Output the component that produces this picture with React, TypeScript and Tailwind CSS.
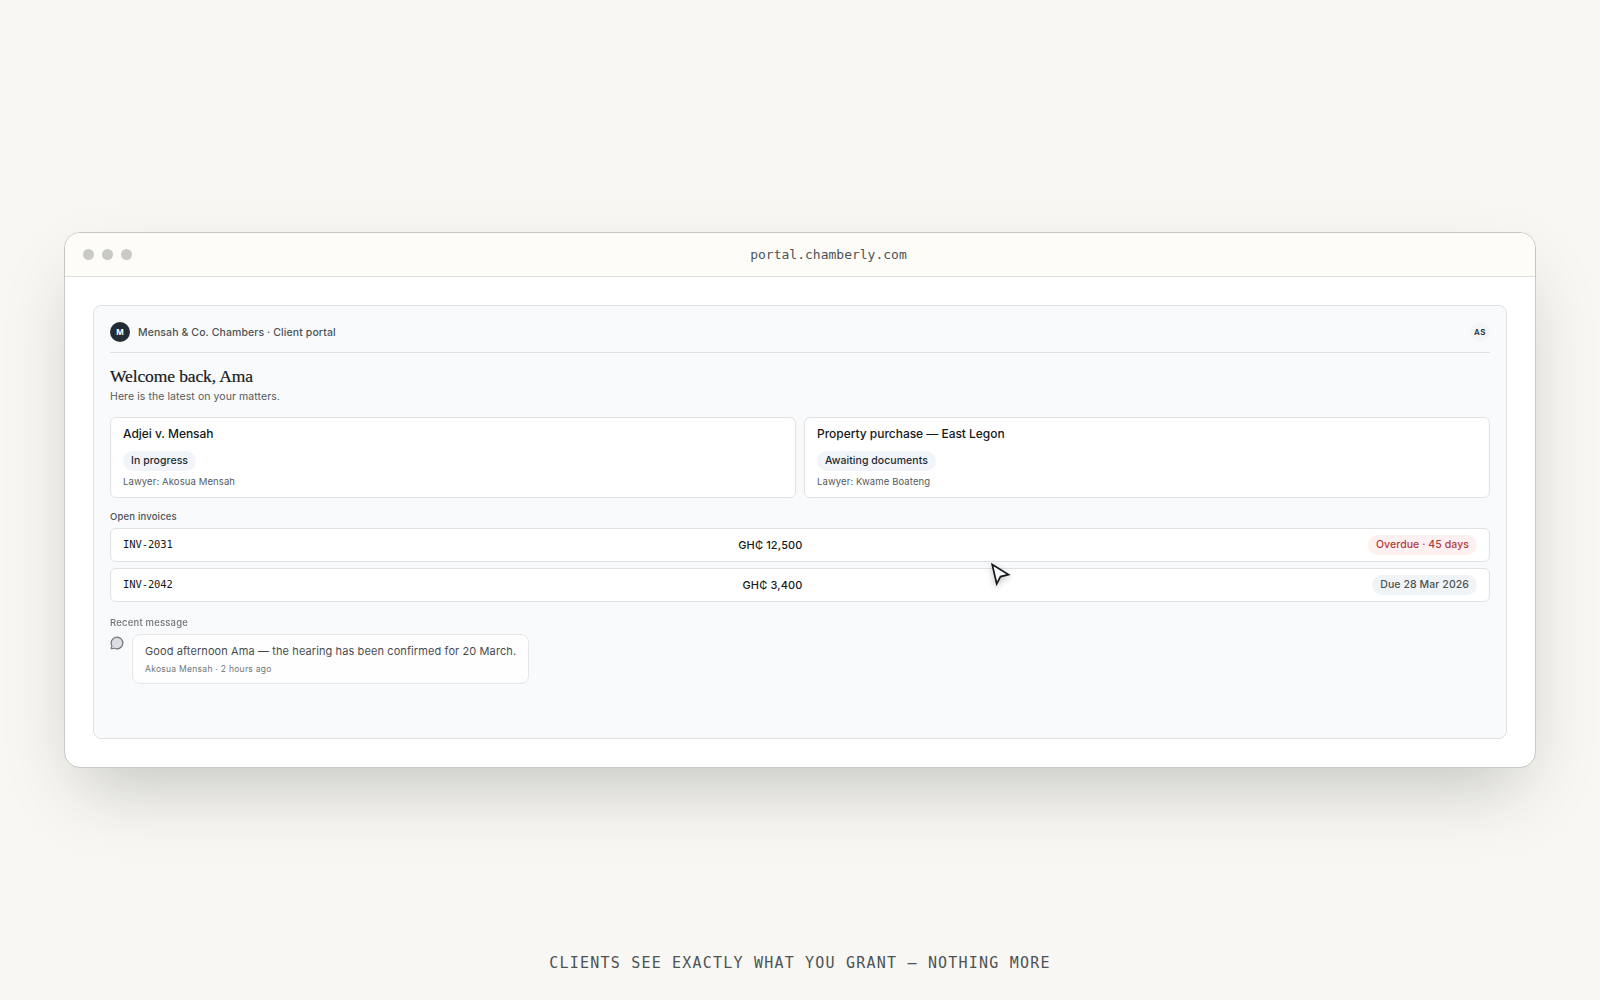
import { ReactNode } from 'react';
import { MessageCircle } from 'lucide-react';

const matters = [
  { title: 'Adjei v. Mensah', status: 'In progress', lawyer: 'Akosua Mensah' },
  { title: 'Property purchase — East Legon', status: 'Awaiting documents', lawyer: 'Kwame Boateng' },
];

const invoices = [
  { id: 'INV-2031', amount: 'GH₵ 12,500', due: 'Overdue · 45 days', overdue: true },
  { id: 'INV-2042', amount: 'GH₵ 3,400', due: 'Due 28 Mar 2026', overdue: false },
];

function BrowserFrame({ url, children }: { url: string; children: ReactNode }) {
  return (
    <div className="flex h-[536px] w-[1472px] flex-col overflow-hidden rounded-2xl border border-[#c6c7c4] bg-white shadow-[0_32px_68px_-18px_rgba(34,38,35,0.26)]">
      <div className="flex h-11 shrink-0 items-center gap-2 border-b border-[#dfe0dd] bg-[#fdfcf8] px-[18px]">
        <span className="size-[11px] rounded-full bg-[#c9c9c6]" />
        <span className="size-[11px] rounded-full bg-[#c9c9c6]" />
        <span className="size-[11px] rounded-full bg-[#c9c9c6]" />
        <span className="flex-1 text-center font-['DejaVu_Sans_Mono',monospace] text-[13px] leading-5 text-[#4d5355]">
          {url}
        </span>
      </div>
      <div className="flex flex-1 p-7">{children}</div>
    </div>
  );
}

export default function App() {
  return (
    <div className="relative flex h-[1000px] w-[1600px] items-center justify-center overflow-hidden bg-[#f8f7f3] font-['Inter',sans-serif]">
      <BrowserFrame url="portal.chamberly.com">
        <div className="flex flex-1 flex-col rounded-lg border border-[#dfe2e4] bg-[#f9fafc] p-4">
          {/* Portal header */}
          <div className="flex h-[31px] shrink-0 items-start justify-between border-b border-[#dfe2e4]">
            <div className="flex items-start gap-2">
              <span className="flex size-5 items-center justify-center rounded-full bg-[#222c35] text-[8px] font-bold text-white">
                M
              </span>
              <span className="pt-px text-[10.5px] leading-5 font-medium tracking-[0.1px] text-[#4d5355]">
                Mensah &amp; Co. Chambers · Client portal
              </span>
            </div>
            <span className="flex size-5 items-center justify-center rounded-full bg-[#f3f6f9] text-[8px] font-semibold tracking-[0.5px] text-[#222c35]">
              AS
            </span>
          </div>

          <h1 className="mt-3 font-['Liberation_Serif',serif] text-[17.5px] leading-[22px] tracking-[-0.11px] text-[#15191b] [-webkit-text-stroke:0.2px]">
            Welcome back, Ama
          </h1>
          <p className="mt-0.5 text-[10.5px] leading-4 tracking-[0.08px] text-[#555b5d]">
            Here is the latest on your matters.
          </p>

          {/* Matters */}
          <div className="mt-3 grid grid-cols-2 gap-2">
            {matters.map((matter) => (
              <div key={matter.title} className="flex h-[81px] flex-col items-start rounded-md border border-[#dfe2e4] bg-white px-3 pt-2">
                <h2 className="text-[12px] leading-4 font-medium tracking-[-0.03px] text-[#15191b]">{matter.title}</h2>
                <span className="mt-[9px] flex h-5 items-center rounded-full bg-[#f1f4f8] px-2 text-[10.5px] font-medium tracking-[0.05px] text-[#222c35]">
                  {matter.status}
                </span>
                <span className="mt-1 text-[9.5px] leading-[13px] tracking-[0.11px] text-[#555b5d]">
                  Lawyer: {matter.lawyer}
                </span>
              </div>
            ))}
          </div>

          {/* Invoices */}
          <h3 className="mt-3 mb-[5px] text-[9.5px] leading-[13px] font-medium tracking-[0.18px] text-[#4d5355]">
            Open invoices
          </h3>
          <div className="flex flex-col gap-1.5">
            {invoices.map((invoice) => (
              <div key={invoice.id} className="flex h-[34px] items-center justify-between rounded-md border border-[#dfe2e4] bg-white px-3">
                <span className="font-['DejaVu_Sans_Mono',monospace] text-[10.5px] tracking-[-0.1px] text-[#15191b]">
                  {invoice.id}
                </span>
                <span className="text-[11px] font-medium tracking-[0.14px] text-[#15191b]">{invoice.amount}</span>
                <span
                  className={
                    invoice.overdue
                      ? 'flex h-5 items-center rounded-full bg-[#fdf0f0] px-2 text-[10.5px] font-medium tracking-[0.07px] text-[#b23a3f]'
                      : 'flex h-5 items-center rounded-full bg-[#f1f4f6] px-2 text-[10.5px] font-medium tracking-[0.08px] text-[#4d5355]'
                  }
                >
                  {invoice.due}
                </span>
              </div>
            ))}
          </div>

          {/* Latest message */}
          <div className="mt-[14px] opacity-80">
            <h3 className="mb-[5px] text-[9.5px] leading-[13px] font-medium tracking-[0.2px] text-[#4d5355]">
              Recent message
            </h3>
            <div className="flex items-start gap-2">
              <MessageCircle className="mt-0.5 size-3.5 shrink-0 fill-[#d2d6da] text-[#4d5355]" />
              <div className="flex h-[50px] flex-col rounded-lg border border-[#dfe2e4] bg-white px-3 pt-2">
                <p className="text-[11px] leading-4 tracking-[0.1px] text-[#15191b]">
                  Good afternoon Ama — the hearing has been confirmed for 20 March.
                </p>
                <p className="mt-1 text-[8.5px] leading-3 tracking-[0.28px] text-[#4d5355]">Akosua Mensah · 2 hours ago</p>
              </div>
            </div>
          </div>
        </div>
      </BrowserFrame>

      {/* Demo pointer */}
      <svg
        className="absolute top-[560px] left-[988px] h-7 w-7 drop-shadow-[0_2px_3px_rgba(0,0,0,0.25)]"
        viewBox="0 0 28 28"
        fill="none"
      >
        <path d="M4.2 4.5 20.5 14.6 12.5 16.6 8.7 23.8Z" fill="#fff" stroke="#15191b" strokeWidth="1.7" />
      </svg>

      <p className="absolute inset-x-0 top-[951px] text-center font-['DejaVu_Sans_Mono',monospace] text-[15px] leading-6 tracking-[1.2px] text-[#4d5355] uppercase">
        Clients see exactly what you grant — nothing more
      </p>
    </div>
  );
}
